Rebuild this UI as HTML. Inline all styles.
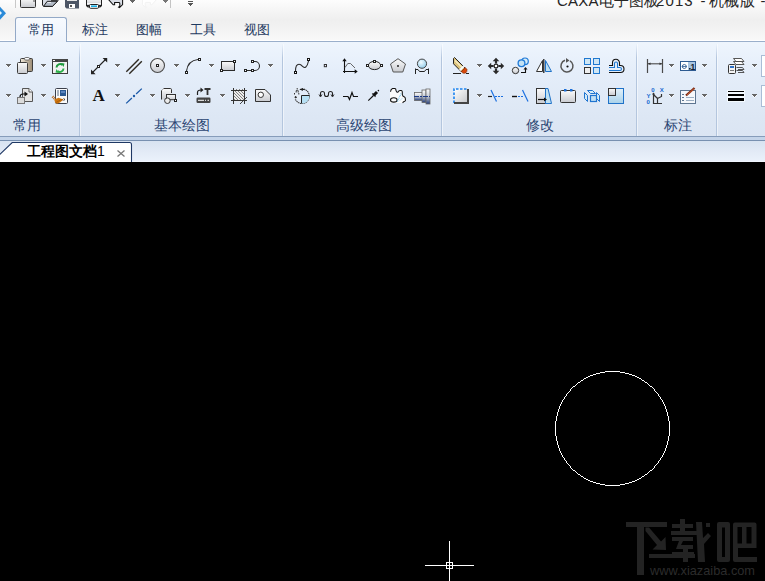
<!DOCTYPE html>
<html><head><meta charset="utf-8"><style>
*{margin:0;padding:0;box-sizing:border-box}
html,body{width:765px;height:581px;overflow:hidden;background:#000;font-family:"Liberation Sans", sans-serif}
.a{position:absolute}
.t{position:absolute;white-space:nowrap;line-height:1}
svg{position:absolute;overflow:visible}
</style></head><body>

<div class="a" style="left:0;top:0;width:765px;height:41px;background:linear-gradient(#fdfdfd,#f7f7f7 8px,#efefef 20px,#f3f3f3 30px,#f8f8f8 40px)"></div>
<div class="a" style="left:0;top:40px;width:765px;height:1px;background:#ffffff"></div>
<div class="a" style="left:0;top:41px;width:765px;height:1px;background:#9aafcb"></div>
<div class="a" style="left:0;top:42px;width:765px;height:94px;background:linear-gradient(#eef5fd,#e5eefa 30%,#dde7f4 80%,#dbe5f3)"></div>
<div class="a" style="left:0;top:136px;width:765px;height:1px;background:#869cba"></div>
<div class="a" style="left:0;top:137px;width:765px;height:3px;background:#c4d4e9"></div>
<div class="a" style="left:0;top:140px;width:765px;height:1px;background:#7890b0"></div>
<div class="a" style="left:0;top:141px;width:765px;height:20px;background:linear-gradient(#d8e3f1,#e2eaf6 50%,#eaf1fb)"></div>
<div class="a" style="left:0;top:161px;width:765px;height:1px;background:#f0f6fe"></div>
<div class="a" style="left:15px;top:0;width:1px;height:8px;background:#c8c8c8"></div>
<div class="a" style="left:170px;top:0;width:1px;height:8px;background:#c4c4c4"></div>
<div class="t" style="left:557px;top:-6.6px;font-size:15px;letter-spacing:0.2px;color:#262626">CAXA电子图板</div>
<div class="t" style="left:656px;top:-6.6px;font-size:15px;letter-spacing:1.1px;color:#262626">2013</div>
<div class="t" style="left:700.5px;top:-6.6px;font-size:15px;letter-spacing:0px;color:#262626">-</div>
<div class="t" style="left:708.5px;top:-6.6px;font-size:15px;letter-spacing:0.8px;color:#262626">机械版</div>
<div class="t" style="left:760.5px;top:-6.6px;font-size:15px;letter-spacing:0px;color:#262626">-</div>
<div class="a" style="left:15px;top:17px;width:52px;height:25px;border:1px solid #93a9c7;border-bottom:none;border-radius:3px 3px 0 0;background:linear-gradient(#f7fafe,#edf3fb)"></div>
<div class="t" style="left:28px;top:23px;font-size:13px;color:#1f3a5f">常用</div>
<div class="t" style="left:82px;top:23px;font-size:13px;color:#1f3a5f">标注</div>
<div class="t" style="left:136px;top:23px;font-size:13px;color:#1f3a5f">图幅</div>
<div class="t" style="left:190px;top:23px;font-size:13px;color:#1f3a5f">工具</div>
<div class="t" style="left:244px;top:23px;font-size:13px;color:#1f3a5f">视图</div>
<div class="a" style="left:79px;top:44px;width:1px;height:92px;background:linear-gradient(rgba(176,196,222,0),#b4c6de 15%,#b4c6de)"></div>
<div class="a" style="left:80px;top:44px;width:1px;height:92px;background:rgba(255,255,255,.5)"></div>
<div class="a" style="left:282px;top:44px;width:1px;height:92px;background:linear-gradient(rgba(176,196,222,0),#b4c6de 15%,#b4c6de)"></div>
<div class="a" style="left:283px;top:44px;width:1px;height:92px;background:rgba(255,255,255,.5)"></div>
<div class="a" style="left:441px;top:44px;width:1px;height:92px;background:linear-gradient(rgba(176,196,222,0),#b4c6de 15%,#b4c6de)"></div>
<div class="a" style="left:442px;top:44px;width:1px;height:92px;background:rgba(255,255,255,.5)"></div>
<div class="a" style="left:636px;top:44px;width:1px;height:92px;background:linear-gradient(rgba(176,196,222,0),#b4c6de 15%,#b4c6de)"></div>
<div class="a" style="left:637px;top:44px;width:1px;height:92px;background:rgba(255,255,255,.5)"></div>
<div class="a" style="left:716px;top:44px;width:1px;height:92px;background:linear-gradient(rgba(176,196,222,0),#b4c6de 15%,#b4c6de)"></div>
<div class="a" style="left:717px;top:44px;width:1px;height:92px;background:rgba(255,255,255,.5)"></div>
<div class="t" style="left:12.8px;top:118.6px;font-size:13.5px;font-weight:500;color:#2a4472">常用</div>
<div class="t" style="left:154.3px;top:118.6px;font-size:13.5px;font-weight:500;color:#2a4472">基本绘图</div>
<div class="t" style="left:336.3px;top:118.6px;font-size:13.5px;font-weight:500;color:#2a4472">高级绘图</div>
<div class="t" style="left:525.8px;top:118.6px;font-size:13.5px;font-weight:500;color:#2a4472">修改</div>
<div class="t" style="left:663.8px;top:118.6px;font-size:13.5px;font-weight:500;color:#2a4472">标注</div>
<svg style="left:0;top:0" width="765" height="162"><path d="M-1 155.5 L12.2 142.5 H129.5 Q131.5 142.5 131.5 144.5 V162 H-1 Z" fill="#fff"/><path d="M-1.5 155.8 L12.2 142.5 H129.5 Q131.5 142.5 131.5 144.5 V162" fill="none" stroke="#1f3864" stroke-width="1.1"/></svg>
<div class="t" style="left:27px;top:143.8px;font-size:14px;font-weight:bold;color:#000">工程图文档<span style="font-weight:normal">1</span></div>
<svg style="left:117px;top:150px" width="8" height="7"><path d="M0.5 0.5L7.5 6.5M7.5 0.5L0.5 6.5" stroke="#777" stroke-width="1.3"/></svg>
<svg style="left:0;top:0" width="765" height="162"><defs>
<linearGradient id="gGray" x1="0" y1="0" x2="0" y2="1"><stop offset="0" stop-color="#fbfbfb"/><stop offset="1" stop-color="#c9cbd0"/></linearGradient>
<linearGradient id="gGray2" x1="0" y1="0" x2="1" y2="1"><stop offset="0" stop-color="#ffffff"/><stop offset="1" stop-color="#c4c6ca"/></linearGradient>
<linearGradient id="gTan" x1="0" y1="0" x2="1" y2="0"><stop offset="0" stop-color="#efe8da"/><stop offset="1" stop-color="#9b8b74"/></linearGradient>
<linearGradient id="gBlue" x1="0" y1="0" x2="0" y2="1"><stop offset="0" stop-color="#e3f1fa"/><stop offset="1" stop-color="#a9d2ea"/></linearGradient>
<linearGradient id="gShaft" x1="0" y1="0" x2="0" y2="1"><stop offset="0" stop-color="#ffffff"/><stop offset=".5" stop-color="#c7ccd6"/><stop offset="1" stop-color="#203a78"/></linearGradient>
<radialGradient id="gBall" cx=".4" cy=".35" r=".7"><stop offset="0" stop-color="#f2fbff"/><stop offset="1" stop-color="#8fcbea"/></radialGradient>
</defs><path d="M-6.5 13.2 L0 6.7 L6 13.2 L0 19.7 Z" fill="#2a8ad8"/><path d="M-2 13 L0 11 L2 13 L0 15 Z" fill="#eef7fd"/><path d="M20.5 -2 V6.5 Q20.5 7.5 21.5 7.5 H34.5 Q35.5 7.5 35.5 6.5 V-2 Z" fill="url(#gGray)" stroke="#333"/><rect x="33" y="0" width="2" height="2" fill="#999"/><path d="M42.5 -2 V5 L43.8 6.5 H52.5 L58 0.5 L57.5 -2 Z" fill="#d9dde5" stroke="#1e1e1e" stroke-width="1"/><rect x="51" y="-2" width="6.5" height="2.8" fill="#1e1e1e"/><path d="M47.2 1.3 H57.5 L52.4 6.3 H43.6 Z" fill="#b3bbc7" stroke="#1e1e1e" stroke-width="1"/><path d="M47.5 2.5 H51" stroke="#fafafa" stroke-width=".8"/><path d="M65 -2 H79 V8.5 H66.5 L65 7 Z" fill="#4d5666"/><rect x="67" y="-2" width="10" height="3" fill="#e8e8e8"/><rect x="69" y="4" width="6" height="4" fill="#fff"/><rect x="70" y="5" width="2" height="2" fill="#555"/><rect x="86.5" y="-2" width="15" height="7.5" fill="url(#gGray)" stroke="#222"/><path d="M87 3.7 H101" stroke="#fff" stroke-width="1"/><path d="M86.5 5.5 L88 6.8 H90 M101.5 5.5 L100 6.8 H98" fill="none" stroke="#222" stroke-width="1.3"/><rect x="89.5" y="4.5" width="9" height="3.8" rx="1" fill="#fff" stroke="#222"/><rect x="91" y="5.4" width="6" height="1.6" fill="#19b0e6"/><path d="M108 -1 L113.2 4.8 H114.6 V2.4 H119 Q119.8 2.6 119.8 3.5 V6.2 L118.6 7.2 L119.5 7.6 L122.6 4.6 V-2 H108 Z" fill="#d9dde5" stroke="#111" stroke-width="1.05"/><path shape-rendering="crispEdges" fill="#666" d="M130 0h5v1h-1v1h-1v1h-1v-1h-1v-1h-1z"/><path d="M157 -1 L151.8 4.8 H150.4 V2.4 H146 Q145.2 2.6 145.2 3.5 V6.2 L146.4 7.2 L145.5 7.6 L142.4 4.6 V-2 H157 Z" fill="#ffffff" stroke="#f2f2f2" stroke-width="1"/><path shape-rendering="crispEdges" fill="#777" d="M163 0h5v1h-1v1h-1v1h-1v-1h-1v-1h-1z"/><path shape-rendering="crispEdges" fill="#555" d="M188 1h5v1h-5zM188 3h5v1h-1v1h-1v1h-1v-1h-1v-1h-1z"/><path shape-rendering="crispEdges" fill="#fff" fill-opacity=".75" d="M6 65h1v1h1v1h1v-1h1v-1h1v1h-1v1h-1v1h-1v-1h-1v-1h-1z"/><path shape-rendering="crispEdges" fill="#666" d="M6 64h5v1h-1v1h-1v1h-1v-1h-1v-1h-1z"/><path shape-rendering="crispEdges" fill="#fff" fill-opacity=".75" d="M41 65h1v1h1v1h1v-1h1v-1h1v1h-1v1h-1v1h-1v-1h-1v-1h-1z"/><path shape-rendering="crispEdges" fill="#666" d="M41 64h5v1h-1v1h-1v1h-1v-1h-1v-1h-1z"/><path shape-rendering="crispEdges" fill="#fff" fill-opacity=".75" d="M6 95h1v1h1v1h1v-1h1v-1h1v1h-1v1h-1v1h-1v-1h-1v-1h-1z"/><path shape-rendering="crispEdges" fill="#666" d="M6 94h5v1h-1v1h-1v1h-1v-1h-1v-1h-1z"/><path shape-rendering="crispEdges" fill="#fff" fill-opacity=".75" d="M41 95h1v1h1v1h1v-1h1v-1h1v1h-1v1h-1v1h-1v-1h-1v-1h-1z"/><path shape-rendering="crispEdges" fill="#666" d="M41 94h5v1h-1v1h-1v1h-1v-1h-1v-1h-1z"/><rect x="20.5" y="58.5" width="12" height="13" rx="1" fill="url(#gTan)" stroke="#3c3c3c"/><rect x="24.5" y="57.5" width="5" height="2.5" rx="1.2" fill="#fff" stroke="#555" stroke-width=".8"/><rect x="17.5" y="62.5" width="10" height="11" rx="1" fill="url(#gGray)" stroke="#3c3c3c"/><rect x="52.5" y="59.5" width="15" height="14" fill="#f2f2f2" stroke="#3c3c3c"/><rect x="52" y="59" width="16" height="3" fill="#454545"/><rect x="53" y="60" width="2" height="1" fill="#fff"/><path d="M56.5 67.5 A3.6 3.6 0 0 1 62.5 65" fill="none" stroke="#1e9a3c" stroke-width="2"/><path d="M61 63 L64.5 63.5 L63.5 67 Z" fill="#1e9a3c"/><path d="M63.5 68.5 A3.6 3.6 0 0 1 57.5 71" fill="none" stroke="#2bb04a" stroke-width="2"/><path d="M59 73 L55.5 72.5 L56.5 69 Z" fill="#2bb04a"/><path d="M22.5 88.5 H29 L32.5 92 V101.5 H22.5 Z" fill="#e4e4e4" stroke="#555"/><path d="M29 88.5 V92 H32.5" fill="#fff" stroke="#555"/><rect x="17.5" y="97.5" width="7" height="6" fill="#dcdcdc" stroke="#777"/><path d="M20 97 Q20 94 23 94 H25" fill="none" stroke="#111" stroke-width="1.2"/><path d="M24.5 91.5 L28 94 L24.5 96.5 Z" fill="#111"/><rect x="55.5" y="88.5" width="12" height="15" rx="1" fill="#fafafa" stroke="#3a3f4a"/><rect x="57" y="90" width="2" height="6" fill="#a9b3c0"/><rect x="60" y="90" width="6" height="6" fill="#2c5a94"/><rect x="61" y="91" width="4" height="2" fill="#5c86c0"/><path d="M52.5 96.5 L55.5 99.5" stroke="#b86a20" stroke-width="2.6" stroke-dasharray="1 .8"/><path d="M54.5 99.5 L58.5 97.8 L63.5 99.6 L60 102.4 L57 103.8 L55 102.5 Z" fill="#cf760e"/><path d="M56 102.5 L60.5 100 L63 99.7" fill="none" stroke="#a35508" stroke-width=".8"/><path d="M63.5 98.5 L65 99.5 L63.5 100.5" fill="none" stroke="#333" stroke-width=".9"/><path shape-rendering="crispEdges" fill="#fff" fill-opacity=".75" d="M115 65h1v1h1v1h1v-1h1v-1h1v1h-1v1h-1v1h-1v-1h-1v-1h-1z"/><path shape-rendering="crispEdges" fill="#666" d="M115 64h5v1h-1v1h-1v1h-1v-1h-1v-1h-1z"/><path shape-rendering="crispEdges" fill="#fff" fill-opacity=".75" d="M174 65h1v1h1v1h1v-1h1v-1h1v1h-1v1h-1v1h-1v-1h-1v-1h-1z"/><path shape-rendering="crispEdges" fill="#666" d="M174 64h5v1h-1v1h-1v1h-1v-1h-1v-1h-1z"/><path shape-rendering="crispEdges" fill="#fff" fill-opacity=".75" d="M209 65h1v1h1v1h1v-1h1v-1h1v1h-1v1h-1v1h-1v-1h-1v-1h-1z"/><path shape-rendering="crispEdges" fill="#666" d="M209 64h5v1h-1v1h-1v1h-1v-1h-1v-1h-1z"/><path shape-rendering="crispEdges" fill="#fff" fill-opacity=".75" d="M268 65h1v1h1v1h1v-1h1v-1h1v1h-1v1h-1v1h-1v-1h-1v-1h-1z"/><path shape-rendering="crispEdges" fill="#666" d="M268 64h5v1h-1v1h-1v1h-1v-1h-1v-1h-1z"/><path shape-rendering="crispEdges" fill="#fff" fill-opacity=".75" d="M115 95h1v1h1v1h1v-1h1v-1h1v1h-1v1h-1v1h-1v-1h-1v-1h-1z"/><path shape-rendering="crispEdges" fill="#666" d="M115 94h5v1h-1v1h-1v1h-1v-1h-1v-1h-1z"/><path shape-rendering="crispEdges" fill="#fff" fill-opacity=".75" d="M150 95h1v1h1v1h1v-1h1v-1h1v1h-1v1h-1v1h-1v-1h-1v-1h-1z"/><path shape-rendering="crispEdges" fill="#666" d="M150 94h5v1h-1v1h-1v1h-1v-1h-1v-1h-1z"/><path shape-rendering="crispEdges" fill="#fff" fill-opacity=".75" d="M185 95h1v1h1v1h1v-1h1v-1h1v1h-1v1h-1v1h-1v-1h-1v-1h-1z"/><path shape-rendering="crispEdges" fill="#666" d="M185 94h5v1h-1v1h-1v1h-1v-1h-1v-1h-1z"/><path shape-rendering="crispEdges" fill="#fff" fill-opacity=".75" d="M220 95h1v1h1v1h1v-1h1v-1h1v1h-1v1h-1v1h-1v-1h-1v-1h-1z"/><path shape-rendering="crispEdges" fill="#666" d="M220 94h5v1h-1v1h-1v1h-1v-1h-1v-1h-1z"/><path d="M92.5 72.5 L105.5 59.5" stroke="#222" stroke-width="1.1"/><path d="M91 74.2 V69.6 L95.6 74.2 Z M107.2 58 V62.6 L102.6 58 Z" fill="#222"/><rect x="97.5" y="65.5" width="2" height="2" fill="#fff" stroke="#222"/><path d="M126.3 71.8 L138.8 59.3 M129.3 73.8 L141.8 61.3" stroke="#2f2a22" stroke-width="1.4"/><circle cx="157.5" cy="65.5" r="7" fill="url(#gGray)" stroke="#4a4a4a" stroke-width="1.1"/><rect x="156.5" y="64.5" width="2" height="2" fill="#fff" stroke="#222"/><path d="M186.5 71 Q188 60.5 198 59.5" fill="none" stroke="#2a2a2a" stroke-width="1.1"/><rect x="185.5" y="71.5" width="2" height="2" fill="#fff" stroke="#222"/><rect x="198.5" y="58.5" width="2" height="2" fill="#fff" stroke="#222"/><rect x="221.5" y="61.5" width="13" height="9" fill="url(#gGray)" stroke="#2a2a2a"/><rect x="233.5" y="60.5" width="2" height="2" fill="#fff" stroke="#222"/><rect x="220.5" y="69.5" width="2" height="2" fill="#fff" stroke="#222"/><path d="M246 70.5 H252 M253 61.5 H255 A4.5 4.5 0 0 1 255 70.5 H253" fill="none" stroke="#2a2a2a" stroke-width="1.1"/><rect x="244.5" y="69.5" width="2" height="2" fill="#fff" stroke="#222"/><rect x="251.5" y="69.5" width="2" height="2" fill="#fff" stroke="#222"/><rect x="251.5" y="60.5" width="2" height="2" fill="#fff" stroke="#222"/><text x="92.5" y="101.3" font-family="Liberation Serif" font-weight="bold" font-size="17" fill="#111">A</text><path d="M126.2 103.4 L131.9 98 M136.1 94 L141.8 88.6" stroke="#1c5aa8" stroke-width="1.3"/><circle cx="134" cy="96" r="1.2" fill="#1c5aa8"/><path d="M161.5 99.5 V90.8 L163.8 88.5 H170.3 Q171.5 88.5 171.5 89.7 V99.5 Z" fill="url(#gGray)"/><path d="M161.5 99.5 V90.8 L163.8 88.5 H170.3 Q171.5 88.5 171.5 89.7 V93" fill="none" stroke="#333"/><rect x="162.3" y="89.3" width="1.6" height="1.6" fill="#fff"/><rect x="166.5" y="94.5" width="9" height="5.2" fill="url(#gGray)" stroke="#333"/><circle cx="167.4" cy="100.7" r="2.8" fill="#ececec" stroke="#333"/><rect x="174.5" y="99.5" width="2" height="2" fill="#fff" stroke="#222"/><path d="M197.5 95 V92.5 Q197.5 90 201 90" fill="none" stroke="#222" stroke-width="1.2"/><path d="M200.5 87.5 L203.5 90 L200.5 92.5 Z" fill="#222"/><path d="M204.5 89 H210.5 M207.5 89 V95" stroke="#333" stroke-width="1.8"/><rect x="196.5" y="97.5" width="14" height="5.5" rx="1.2" fill="#444"/><path d="M198 100.3 H204 M205 100.3 H206 M207.5 100.3 H209" stroke="#fff" stroke-width="1"/><rect x="233.5" y="89.5" width="11" height="12" fill="#ececec"/><path d="M242 89 L244 91 M239 89 L244 94 M236 89 L244 97 M234 90 L244 100 M234 93 L242 101 M234 96 L239 101 M234 99 L236 101" stroke="#666" stroke-width=".8"/><path d="M231 90.5 H247 M231 100.5 H247 M233.5 88 V104 M244.5 88 V104" stroke="#333" stroke-width="1"/><path d="M240 104 L247 97" stroke="#333" stroke-width=".9"/><path d="M255.5 89.5 H265 L270.5 95 V101.5 H255.5 Z" fill="url(#gGray)" stroke="#333"/><circle cx="260.8" cy="94.8" r="2.7" fill="#fff" stroke="#333"/><path d="M295.5 71 Q295.5 64.2 299 64.2 Q300.8 64.2 302.3 66.2 Q304 68.2 305.8 67 Q307.6 65.5 308.5 61" fill="none" stroke="#2a2a2a" stroke-width="1.1"/><rect x="294.5" y="71.5" width="2" height="2" fill="#fff" stroke="#111"/><rect x="307.5" y="58.5" width="2" height="2" fill="#fff" stroke="#111"/><rect x="324.3" y="64.5" width="2.2" height="2.2" fill="#eef" stroke="#333"/><path d="M344.5 60 V73 M343 71.5 H356" fill="none" stroke="#111" stroke-width="1.1"/><path d="M344.5 58.3 L346.7 61.3 H342.3 Z M357.7 71.5 L354.7 69.3 V73.7 Z" fill="#111"/><path d="M345 67.5 L347.8 63.5 H350.5 L355 68" fill="none" stroke="#555" stroke-width=".9"/><ellipse cx="374.5" cy="65.5" rx="6.2" ry="4.1" fill="url(#gGray)" stroke="#222"/><rect x="366.5" y="64.5" width="2" height="2" fill="#fff" stroke="#222"/><rect x="380.5" y="64.5" width="2" height="2" fill="#fff" stroke="#222"/><rect x="373.5" y="60.5" width="2" height="2" fill="#fff" stroke="#222"/><path d="M398 58.7 L405.5 64 L402.8 72 H393.2 L390.5 64 Z" fill="url(#gGray)" stroke="#555"/><circle cx="398" cy="66" r=".9" fill="#111"/><circle cx="422" cy="63.7" r="4.6" fill="url(#gBall)" stroke="#444"/><path d="M415.5 74 V68.5 M415.5 69.5 H418 L419.5 71.5 H424.5 L426 69.5 H428.5 M428.5 68.5 V74" fill="none" stroke="#222" stroke-width="1"/><circle cx="302" cy="96.2" r="7.3" fill="none" stroke="#3a3a3a" stroke-width="1.1" stroke-dasharray="1.5 .5"/><path d="M301.5 103.5 V95.5 H309.3 A7.3 7.3 0 0 1 301.5 103.5 Z" fill="#b6e0f4"/><path d="M301.5 103.5 V95.5 H309.3" fill="none" stroke="#222" stroke-width="1"/><rect x="293.5" y="88" width="7" height="11" fill="#e4ecf6"/><path d="M299.8 89.5 H304 M302.2 88 V91" stroke="#222" stroke-width="1"/><path d="M296.2 92.5 V91 Q296.2 90 297.2 90 Q298.2 90 298.2 91 V92.5 M297.2 88 V89 M294.5 93 V94.5 M298.8 93 V94.5 M294.5 97.3 H297 M295.6 96 V98.3" fill="none" stroke="#222" stroke-width=".9"/><path d="M320.5 96 V93.5 Q320.5 91.5 322.5 91.5 Q324.5 91.5 324.5 93.5 V94.5 Q324.5 96.5 326.5 96.5 Q328.5 96.5 328.5 94.5 V93.5 Q328.5 91.5 330.5 91.5 Q332.5 91.5 332.5 93.5 V96" fill="none" stroke="#222" stroke-width="1.1"/><path d="M319 94.5 L320.5 97 L322 94.5 M331 94.5 L332.5 97 L334 94.5" fill="none" stroke="#222" stroke-width=".9"/><path d="M343 96.5 H348 L349.5 99.5 L352 92.5 L353.5 96.5 H358" fill="none" stroke="#111" stroke-width="1.2"/><path d="M368.3 100.7 L373.5 95.5" stroke="#111" stroke-width="1.1"/><path d="M373.8 95.2 L377 92" stroke="#111" stroke-width="3"/><path d="M371.8 93.2 L375 93.8 L375.8 97.2 L373 95.5 Z" fill="#111"/><circle cx="378.4" cy="90.6" r=".8" fill="#111"/><path d="M390 92 L392 88.5 H395.5 L396.5 92.5 H398 L399 90.5 H402 V95 L405.5 97.5 V101.5 L402.5 103 H390 Z" fill="#fbfbfb"/><path d="M390.5 91.8 Q390.8 89 392.5 88.5 H395 Q396 88.8 396 90.5 Q396.3 92.5 397.8 92.3 Q398.3 90.5 400 90.4 H401.3 Q402.3 90.6 402.3 92 V94.5 Q402.6 96.5 404.5 97 Q405.4 97.6 405.4 99 V100.6 Q405 101.6 403.5 101.8 L402.6 102.8" fill="none" stroke="#111" stroke-width="1.05"/><ellipse cx="393.8" cy="99.9" rx="3.3" ry="2.2" fill="none" stroke="#111" stroke-width="1.05"/><path d="M397.5 101.5 L401 93.5" stroke="#6cc0ee" stroke-width="1.2" stroke-dasharray=".8 .8"/><path d="M399.5 101 L403 97.5" stroke="#8fd0f2" stroke-width="1" stroke-dasharray=".8 .8"/><rect x="414.5" y="92.5" width="8" height="8" fill="url(#gShaft)" stroke="#666" stroke-width=".8"/><rect x="422" y="90" width="4" height="12.5" fill="url(#gShaft)" stroke="#666" stroke-width=".8"/><rect x="426" y="89" width="4" height="15" fill="url(#gShaft)" stroke="#666" stroke-width=".8"/><path d="M414 96.5 H430" stroke="#1c3a86" stroke-width="1.1" stroke-dasharray="5 1 2 1"/><path shape-rendering="crispEdges" fill="#fff" fill-opacity=".75" d="M477 65h1v1h1v1h1v-1h1v-1h1v1h-1v1h-1v1h-1v-1h-1v-1h-1z"/><path shape-rendering="crispEdges" fill="#666" d="M477 64h5v1h-1v1h-1v1h-1v-1h-1v-1h-1z"/><path shape-rendering="crispEdges" fill="#fff" fill-opacity=".75" d="M477 95h1v1h1v1h1v-1h1v-1h1v1h-1v1h-1v1h-1v-1h-1v-1h-1z"/><path shape-rendering="crispEdges" fill="#666" d="M477 94h5v1h-1v1h-1v1h-1v-1h-1v-1h-1z"/><path d="M454.5 57.5 L465 68 L461.3 71.7 L453.5 63.8 V58.5 Z" fill="#dcc27a" stroke="#222" stroke-width="1"/><path d="M455 60.5 L462 67.5" stroke="#f6ecc4" stroke-width="1.2"/><path d="M459.8 70.3 L463.8 66.3" stroke="#fafafa" stroke-width="2"/><path d="M461.2 71.5 L465.2 67.5 L466.8 69.2 Q467.6 71.5 465.8 72.9 Q464 73.6 462.8 73 Z" fill="#d9480a" stroke="#7a2a08" stroke-width=".6"/><path d="M453 73.5 H461 M466 73.5 H469" stroke="#222" stroke-width="1.1"/><path d="M496 57.8 L499.3 61.2 H492.7 Z M496 74.2 L499.3 70.8 H492.7 Z M487.8 66 L491.2 62.7 V69.3 Z M504.2 66 L500.8 62.7 V69.3 Z" fill="#2a2a2a"/><path d="M496 61 V63.6 M496 68.4 V71 M491 66 H493.6 M498.4 66 H501" stroke="#2a2a2a" stroke-width="2.2"/><circle cx="496" cy="66" r="1.9" fill="#fff" stroke="#222" stroke-width="1.2"/><circle cx="525" cy="61.3" r="3.3" fill="#d6ecf8" stroke="#1f7ad8" stroke-width="1.2"/><circle cx="521.5" cy="63.3" r="3.4" fill="#c4e2f4" stroke="#1f7ad8" stroke-width="1.3"/><circle cx="515.5" cy="70.5" r="3.2" fill="url(#gGray)" stroke="#333" stroke-width="1"/><path d="M521 72.5 H525.5 V68.5" fill="none" stroke="#111" stroke-width="1.1"/><path d="M523.5 69.5 L525.5 67 L527.5 69.5 Z" fill="#111"/><path d="M542.5 60.5 V71.5 H536.5 Z" fill="#fff" stroke="#333"/><path d="M543.8 59 V73" stroke="#111" stroke-width="1.2"/><path d="M545.5 60.5 V71.5 H551.5 Z" fill="#bfe0f2" stroke="#1f72c8"/><path d="M565 60.3 A6 6 0 1 0 570 60.8" fill="none" stroke="#555" stroke-width="1.5"/><path d="M566 58 L569.5 60.5 L566 62.8 Z" fill="#555"/><circle cx="567.5" cy="66.5" r="1.1" fill="#111"/><rect x="584.5" y="58.5" width="6" height="6" fill="#cfe6f4" stroke="#1f78d0"/><rect x="593.5" y="58.5" width="6" height="6" fill="#cfe6f4" stroke="#1f78d0"/><rect x="584.5" y="67.5" width="6" height="6" fill="#eee" stroke="#333"/><rect x="593.5" y="67.5" width="6" height="6" fill="#cfe6f4" stroke="#1f78d0"/><path d="M609 65.5 H612.5 V62.8 A3.5 3.5 0 0 1 619.5 62.8 V65.5 H620.5 A3.5 3.5 0 0 1 620.5 72.5 H609" fill="none" stroke="#111" stroke-width="1.1"/><path d="M609 67.5 H614.5 V63.5 A1.5 1.5 0 0 1 617.5 63.5 V67.5 H620 A1.4 1.4 0 0 1 620 70.5 H609" fill="none" stroke="#1f78d0" stroke-width="1.1"/><rect x="454" y="89" width="14" height="14" fill="url(#gGray2)"/><path d="M454 103 V89 H468" fill="none" stroke="#1a82f0" stroke-width="1.6" stroke-dasharray="2.5 1.5"/><path d="M468 89 V103 H454" fill="none" stroke="#444" stroke-width="2"/><path d="M488 96.5 H492" stroke="#222" stroke-width="1.2"/><path d="M491 90 L496.5 101.5" stroke="#1a6fe0" stroke-width="1.2"/><path d="M495 96.5 H504" stroke="#1a6fe0" stroke-width="1.2" stroke-dasharray="2 1"/><path d="M512 96.5 H517" stroke="#111" stroke-width="1.4"/><path d="M518 96.5 H523" stroke="#1a6fe0" stroke-width="1.2" stroke-dasharray="2 1"/><path d="M522.5 90 L528 101.5" stroke="#1a6fe0" stroke-width="1.2"/><rect x="536.5" y="88.5" width="9" height="15" fill="url(#gGray)" stroke="#333"/><path d="M545.5 88.5 H548 L551.5 103.5 H545.5 Z" fill="#bfe0f2" stroke="#1f72c8"/><path d="M538 99.5 H545" stroke="#111" stroke-width="1.2"/><path d="M544 97.5 L547 99.5 L544 101.5 Z" fill="#111"/><rect x="560.5" y="90.5" width="15" height="12" rx="1" fill="url(#gGray)" stroke="#333"/><rect x="564" y="89" width="2.5" height="2.5" fill="#1c6fd8"/><rect x="570" y="89" width="2.5" height="2.5" fill="#1c6fd8"/><path d="M587.5 90.5 H592.5 L595.5 93.5 H590.5 Z M584.5 92.5 L587.5 95.5 V101.5 L584.5 98.5 Z M596.5 92.5 L599.5 95.5 V101.5 L596.5 98.5 Z" fill="#d4ecf8" stroke="#1f74d0" stroke-width="1"/><rect x="590.5" y="95.5" width="6" height="6" fill="#c2e0f2" stroke="#1f74d0" stroke-width="1.2"/><rect x="608.5" y="88.5" width="15" height="15" fill="url(#gBlue)" stroke="#1f72c8"/><rect x="608.5" y="88.5" width="7" height="7" fill="url(#gGray)" stroke="#333"/><path shape-rendering="crispEdges" fill="#fff" fill-opacity=".75" d="M669 65h1v1h1v1h1v-1h1v-1h1v1h-1v1h-1v1h-1v-1h-1v-1h-1z"/><path shape-rendering="crispEdges" fill="#666" d="M669 64h5v1h-1v1h-1v1h-1v-1h-1v-1h-1z"/><path shape-rendering="crispEdges" fill="#fff" fill-opacity=".75" d="M669 95h1v1h1v1h1v-1h1v-1h1v1h-1v1h-1v1h-1v-1h-1v-1h-1z"/><path shape-rendering="crispEdges" fill="#666" d="M669 94h5v1h-1v1h-1v1h-1v-1h-1v-1h-1z"/><path shape-rendering="crispEdges" fill="#fff" fill-opacity=".75" d="M702 65h1v1h1v1h1v-1h1v-1h1v1h-1v1h-1v1h-1v-1h-1v-1h-1z"/><path shape-rendering="crispEdges" fill="#666" d="M702 64h5v1h-1v1h-1v1h-1v-1h-1v-1h-1z"/><path shape-rendering="crispEdges" fill="#fff" fill-opacity=".75" d="M702 95h1v1h1v1h1v-1h1v-1h1v1h-1v1h-1v1h-1v-1h-1v-1h-1z"/><path shape-rendering="crispEdges" fill="#666" d="M702 94h5v1h-1v1h-1v1h-1v-1h-1v-1h-1z"/><path d="M647.5 59 V73 M662.5 59 V73" stroke="#4a4a4a" stroke-width="1.2"/><path d="M648 63.8 H662" stroke="#4a4a4a" stroke-width="1.1"/><path d="M648 63.8 L650.5 62.5 V65 Z M662 63.8 L659.5 62.5 V65 Z" fill="#333"/><rect x="680.5" y="61.5" width="15" height="9" fill="#fff" stroke="#2d5a90"/><rect x="688" y="62" width="7" height="8" fill="#a8c4e0"/><circle cx="684.3" cy="66.5" r="2" fill="none" stroke="#2d5a90" stroke-width=".9"/><path d="M681.8 66.5 H686.8" stroke="#2d5a90" stroke-width=".8"/><rect x="689" y="68" width="1.6" height="1.6" fill="#123"/><text x="690.5" y="69.8" font-family="Liberation Sans" font-weight="bold" font-size="8.5" fill="#123">1</text><g font-family="Liberation Sans" font-weight="bold" fill="#1468d0"><text x="646.6" y="97.6" font-size="6">Y</text><text x="651.2" y="92" font-size="6">0</text><text x="659.8" y="92" font-size="6">X</text><text x="646.6" y="103.8" font-size="6">0</text></g><path d="M653.5 93 V103.5 H662 M653.5 94.5 L657.5 98.5 M657.5 97.5 V103.5 M657.5 98.5 L661.5 96.5 V94" fill="none" stroke="#333" stroke-width="1.2"/><path d="M652 94.5 L653.5 92.5 L655 94.5 Z" fill="#333"/><rect x="680.5" y="90.5" width="15" height="13" fill="#f6f8fb" stroke="#5d7590"/><path d="M682 94.5 h2 M682 97.5 h2 M682 100.5 h2" stroke="#5d7590" stroke-width="1"/><path d="M686 97.5 H694 M686 100.5 H694" stroke="#9db0c4" stroke-width="1"/><path d="M686 95.5 L694.5 88" stroke="#7a2a12" stroke-width="2.2"/><path d="M687 95 L694 88.8" stroke="#e06a3a" stroke-width=".8"/><path shape-rendering="crispEdges" fill="#fff" fill-opacity=".75" d="M752 65h1v1h1v1h1v-1h1v-1h1v1h-1v1h-1v1h-1v-1h-1v-1h-1z"/><path shape-rendering="crispEdges" fill="#666" d="M752 64h5v1h-1v1h-1v1h-1v-1h-1v-1h-1z"/><path shape-rendering="crispEdges" fill="#fff" fill-opacity=".75" d="M752 95h1v1h1v1h1v-1h1v-1h1v1h-1v1h-1v1h-1v-1h-1v-1h-1z"/><path shape-rendering="crispEdges" fill="#666" d="M752 94h5v1h-1v1h-1v1h-1v-1h-1v-1h-1z"/><path d="M733.5 61.5 H741.5 L744 64.5 H736 Z" fill="#fff" stroke="#444" stroke-width=".9"/><path d="M733.5 58.5 H741.5 L744 61.5 H736 Z" fill="#fff" stroke="#444" stroke-width=".9"/><path d="M736.5 67.5 H742.5 L744 69.5 H738 M736.5 70.5 H742.5 L744 72.5 H738" fill="none" stroke="#444" stroke-width=".9"/><rect x="728.5" y="64.5" width="7" height="9" rx="1" fill="#f4f4f4" stroke="#333"/><rect x="730" y="66" width="4" height="2" fill="#2f72c8"/><path d="M730 70.5 H734" stroke="#555" stroke-width=".8"/><rect x="727" y="90" width="18" height="12" fill="#f8fcff" fill-opacity=".8"/><rect x="728" y="91" width="16" height="1" fill="#000"/><rect x="728" y="94" width="16" height="2" fill="#000"/><rect x="728" y="98" width="16" height="3" fill="#000"/><rect x="761.5" y="55.5" width="10" height="21" fill="#fff" stroke="#a9bdd6"/><rect x="761.5" y="85.5" width="10" height="21" fill="#fff" stroke="#a9bdd6"/></svg>
<div class="a" style="left:0;top:162px;width:765px;height:419px;background:#000"></div>
<svg style="left:0;top:0" width="765" height="581" shape-rendering="crispEdges"><path fill="#fff" d="M605 371h15v1h-15zM600 372h5v1h-5zM620 372h5v1h-5zM596 373h4v1h-4zM625 373h4v1h-4zM593 374h3v1h-3zM629 374h3v1h-3zM590 375h3v1h-3zM632 375h3v1h-3zM588 376h2v1h-2zM635 376h2v1h-2zM586 377h2v1h-2zM637 377h2v1h-2zM584 378h2v1h-2zM639 378h2v1h-2zM583 379h1v1h-1zM641 379h1v1h-1zM581 380h2v1h-2zM642 380h2v1h-2zM580 381h1v1h-1zM644 381h1v1h-1zM578 382h2v1h-2zM645 382h2v1h-2zM577 383h1v1h-1zM647 383h1v1h-1zM576 384h1v1h-1zM648 384h1v1h-1zM575 385h1v1h-1zM649 385h1v1h-1zM573 386h2v1h-2zM650 386h2v1h-2zM572 387h1v1h-1zM652 387h1v1h-1zM571 388h1v1h-1zM653 388h1v1h-1zM570 389h1v1h-1zM654 389h1v1h-1zM570 390h1v1h-1zM654 390h1v1h-1zM569 391h1v1h-1zM655 391h1v1h-1zM568 392h1v1h-1zM656 392h1v1h-1zM567 393h1v1h-1zM657 393h1v1h-1zM566 394h1v1h-1zM658 394h1v1h-1zM566 395h1v1h-1zM658 395h1v1h-1zM565 396h1v1h-1zM659 396h1v1h-1zM564 397h1v1h-1zM660 397h1v1h-1zM564 398h1v1h-1zM660 398h1v1h-1zM563 399h1v1h-1zM661 399h1v1h-1zM562 400h1v1h-1zM662 400h1v1h-1zM562 401h1v1h-1zM662 401h1v1h-1zM561 402h1v1h-1zM663 402h1v1h-1zM561 403h1v1h-1zM663 403h1v1h-1zM560 404h1v1h-1zM664 404h1v1h-1zM560 405h1v1h-1zM664 405h1v1h-1zM559 406h1v1h-1zM665 406h1v1h-1zM559 407h1v1h-1zM665 407h1v1h-1zM559 408h1v1h-1zM665 408h1v1h-1zM558 409h1v1h-1zM666 409h1v1h-1zM558 410h1v1h-1zM666 410h1v1h-1zM558 411h1v1h-1zM666 411h1v1h-1zM557 412h1v1h-1zM667 412h1v1h-1zM557 413h1v1h-1zM667 413h1v1h-1zM557 414h1v1h-1zM667 414h1v1h-1zM557 415h1v1h-1zM667 415h1v1h-1zM556 416h1v1h-1zM668 416h1v1h-1zM556 417h1v1h-1zM668 417h1v1h-1zM556 418h1v1h-1zM668 418h1v1h-1zM556 419h1v1h-1zM668 419h1v1h-1zM556 420h1v1h-1zM668 420h1v1h-1zM555 421h1v1h-1zM669 421h1v1h-1zM555 422h1v1h-1zM669 422h1v1h-1zM555 423h1v1h-1zM669 423h1v1h-1zM555 424h1v1h-1zM669 424h1v1h-1zM555 425h1v1h-1zM669 425h1v1h-1zM555 426h1v1h-1zM669 426h1v1h-1zM555 427h1v1h-1zM669 427h1v1h-1zM555 428h1v1h-1zM669 428h1v1h-1zM555 429h1v1h-1zM669 429h1v1h-1zM555 430h1v1h-1zM669 430h1v1h-1zM555 431h1v1h-1zM669 431h1v1h-1zM555 432h1v1h-1zM669 432h1v1h-1zM555 433h1v1h-1zM669 433h1v1h-1zM555 434h1v1h-1zM669 434h1v1h-1zM555 435h1v1h-1zM669 435h1v1h-1zM556 436h1v1h-1zM668 436h1v1h-1zM556 437h1v1h-1zM668 437h1v1h-1zM556 438h1v1h-1zM668 438h1v1h-1zM556 439h1v1h-1zM668 439h1v1h-1zM556 440h1v1h-1zM668 440h1v1h-1zM557 441h1v1h-1zM667 441h1v1h-1zM557 442h1v1h-1zM667 442h1v1h-1zM557 443h1v1h-1zM667 443h1v1h-1zM557 444h1v1h-1zM667 444h1v1h-1zM558 445h1v1h-1zM666 445h1v1h-1zM558 446h1v1h-1zM666 446h1v1h-1zM558 447h1v1h-1zM666 447h1v1h-1zM559 448h1v1h-1zM665 448h1v1h-1zM559 449h1v1h-1zM665 449h1v1h-1zM559 450h1v1h-1zM665 450h1v1h-1zM560 451h1v1h-1zM664 451h1v1h-1zM560 452h1v1h-1zM664 452h1v1h-1zM561 453h1v1h-1zM663 453h1v1h-1zM561 454h1v1h-1zM663 454h1v1h-1zM562 455h1v1h-1zM662 455h1v1h-1zM562 456h1v1h-1zM662 456h1v1h-1zM563 457h1v1h-1zM661 457h1v1h-1zM564 458h1v1h-1zM660 458h1v1h-1zM564 459h1v1h-1zM660 459h1v1h-1zM565 460h1v1h-1zM659 460h1v1h-1zM566 461h1v1h-1zM658 461h1v1h-1zM566 462h1v1h-1zM658 462h1v1h-1zM567 463h1v1h-1zM657 463h1v1h-1zM568 464h1v1h-1zM656 464h1v1h-1zM569 465h1v1h-1zM655 465h1v1h-1zM570 466h1v1h-1zM654 466h1v1h-1zM570 467h1v1h-1zM654 467h1v1h-1zM571 468h1v1h-1zM653 468h1v1h-1zM572 469h1v1h-1zM652 469h1v1h-1zM573 470h2v1h-2zM650 470h2v1h-2zM575 471h1v1h-1zM649 471h1v1h-1zM576 472h1v1h-1zM648 472h1v1h-1zM577 473h1v1h-1zM647 473h1v1h-1zM578 474h2v1h-2zM645 474h2v1h-2zM580 475h1v1h-1zM644 475h1v1h-1zM581 476h2v1h-2zM642 476h2v1h-2zM583 477h1v1h-1zM641 477h1v1h-1zM584 478h2v1h-2zM639 478h2v1h-2zM586 479h2v1h-2zM637 479h2v1h-2zM588 480h2v1h-2zM635 480h2v1h-2zM590 481h3v1h-3zM632 481h3v1h-3zM593 482h3v1h-3zM629 482h3v1h-3zM596 483h4v1h-4zM625 483h4v1h-4zM600 484h5v1h-5zM620 484h5v1h-5zM605 485h15v1h-15z"/><path fill="#fff" d="M449 541h1v40h-1zM425 565h49v1h-49zM446 562h7v1h-7zM446 568h7v1h-7zM446 562h1v7h-1zM452 562h1v7h-1z"/></svg>
<svg style="left:0;top:0" width="765" height="581"><g fill="#232323">
<rect x="626" y="522" width="41" height="5"/><rect x="637" y="527" width="7" height="48"/>
<path d="M645.5 527.5 L649 527.5 L661 541.5 L665.5 537 L666 550 L652.5 549.5 L657 545 L645.5 531 Z"/>
<rect x="649" y="554" width="46" height="4"/>
<rect x="672" y="524" width="21" height="4"/><rect x="680" y="519" width="5" height="12"/><rect x="671" y="531" width="26" height="4"/>
<path d="M676 537 H693 V541 H683 L681 545 H693 V549 H676 L679 541 H672 V537 Z"/>
<rect x="683" y="545" width="5" height="17"/><rect x="672" y="552" width="22" height="4"/>
<path d="M696 522 H702 L703 538 L708 533 L711 536 L704 544 L705 562 H698 Z"/><rect x="706" y="523" width="4" height="4"/>
<path fill-rule="evenodd" d="M719 522 H728 Q730 522 730 524 V560 Q730 562 728 562 H719 Q717 562 717 560 V524 Q717 522 719 522 Z M722 527.5 V557 H725 V527.5 Z"/>
<path fill-rule="evenodd" d="M735 522.5 H754.5 Q756.5 522.5 756.5 524.5 V548 H738 V557 H757 V562 H735 Q733 562 733 560 V524.5 Q733 522.5 735 522.5 Z M737.5 527 V543.5 H742 V527 Z M746.5 527 V543.5 H751.5 V527 Z"/>
</g><text x="650" y="575" font-family="Liberation Sans" font-size="12.2" fill="#2c2c2c" textLength="105" lengthAdjust="spacingAndGlyphs">www.xiazaiba.com</text></svg>
</body></html>
